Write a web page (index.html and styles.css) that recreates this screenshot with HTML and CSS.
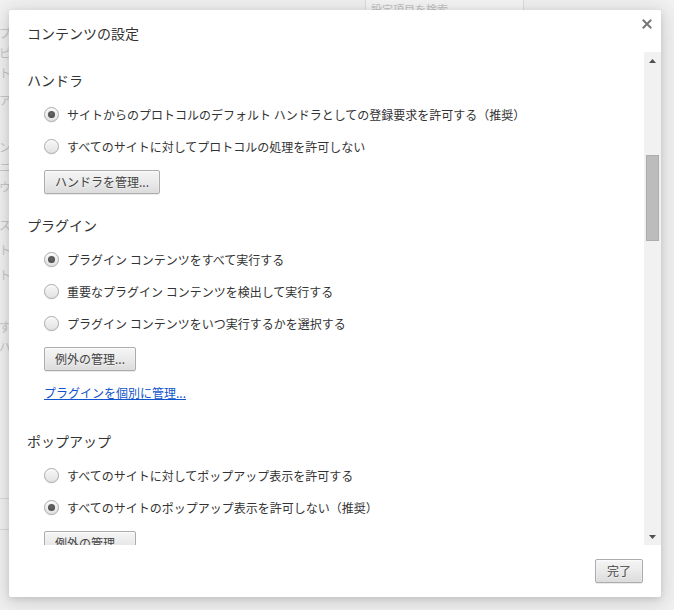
FILE: index.html
```html
<!DOCTYPE html>
<html lang="ja">
<head>
<meta charset="utf-8">
<title>コンテンツの設定</title>
<link rel="stylesheet" href="styles.css">
</head>
<body>
<div class="page">
  <div class="search">設定項目を検索</div>
  <div class="bg-col">
    <div class="bg-group g1"><p>ブ</p><p>ピ</p><p>ト</p></div>
    <div class="bg-group g2"><p>ア</p></div>
    <div class="bg-group g3"><p>ン</p><p>ニ</p><p>ウ</p></div>
    <div class="bg-group g4"><p>ス</p><p>ト</p><p>ト</p></div>
    <div class="bg-group g5"><p>す</p><p>ハ</p></div>
    <div class="bg-rule r1"></div>
    <div class="bg-rule r2"></div>
  </div>
</div>

<div class="dialog">
  <div class="dialog-head">
    <h1 class="dialog-title">コンテンツの設定</h1>
    <span class="close" aria-label="閉じる">
      <svg width="10" height="10" viewBox="0 0 10 10"><path d="M1.5 1.5 L8.5 8.5 M8.5 1.5 L1.5 8.5" stroke="#777" stroke-width="2" stroke-linecap="square"/></svg>
    </span>
  </div>

  <div class="dialog-body">
    <div class="content">
      <section class="section">
        <h2 class="section-title">ハンドラ</h2>
        <div class="options">
          <label class="option"><span class="radio checked"></span><span>サイトからのプロトコルのデフォルト ハンドラとしての登録要求を許可する（推奨）</span></label>
          <label class="option"><span class="radio"></span><span>すべてのサイトに対してプロトコルの処理を許可しない</span></label>
        </div>
        <button type="button" class="btn indent">ハンドラを管理...</button>
      </section>

      <section class="section">
        <h2 class="section-title">プラグイン</h2>
        <div class="options">
          <label class="option"><span class="radio checked"></span><span>プラグイン コンテンツをすべて実行する</span></label>
          <label class="option"><span class="radio"></span><span>重要なプラグイン コンテンツを検出して実行する</span></label>
          <label class="option"><span class="radio"></span><span>プラグイン コンテンツをいつ実行するかを選択する</span></label>
        </div>
        <button type="button" class="btn indent">例外の管理...</button>
        <a class="link indent" href="#">プラグインを個別に管理...</a>
      </section>

      <section class="section section-popup">
        <h2 class="section-title">ポップアップ</h2>
        <div class="options">
          <label class="option"><span class="radio"></span><span>すべてのサイトに対してポップアップ表示を許可する</span></label>
          <label class="option"><span class="radio checked"></span><span>すべてのサイトのポップアップ表示を許可しない（推奨）</span></label>
        </div>
        <button type="button" class="btn indent">例外の管理...</button>
      </section>
    </div>

    <div class="scrollbar">
      <div class="sb-btn"><svg width="7" height="4" viewBox="0 0 7 4"><path d="M0 4 L3.5 0 L7 4 Z" fill="#505050"/></svg></div>
      <div class="sb-track"><div class="sb-thumb"></div></div>
      <div class="sb-btn"><svg width="7" height="4" viewBox="0 0 7 4"><path d="M0 0 L3.5 4 L7 0 Z" fill="#505050"/></svg></div>
    </div>
  </div>

  <div class="dialog-foot">
    <button type="button" class="btn">完了</button>
  </div>
</div>
</body>
</html>
```

FILE: styles.css
```css
html, body {
  margin: 0;
  padding: 0;
}

body {
  width: 674px;
  height: 610px;
  overflow: hidden;
  background: #f3f3f3;
  font-family: "Noto Sans CJK JP", "Noto Sans", sans-serif;
  position: relative;
}

/* ---------- background page (dimmed) ---------- */
.page {
  height: 610px;
  overflow: hidden;
}

.search {
  margin: -5px 0 0 365px;
  width: 159px;
  height: 28px;
  box-sizing: border-box;
  border: 1px solid #dedede;
  background: #f7f7f7;
  padding-left: 5px;
  font-size: 11px;
  line-height: 26px;
  color: #c2c2c2;
}

.bg-col {
  margin-left: -1px;
  width: 12px;
  font-size: 12px;
  color: #c9c9c9;
}

.bg-group p {
  margin: 0;
  line-height: 20px;
  white-space: nowrap;
}

.g1 { margin-top: 0; }
.g2 { margin-top: 7px; }
.g3 { margin-top: 27px; }
.g4 { margin-top: 15px; }
.g4 p { line-height: 25px; }
.g5 { margin-top: 30px; }

.bg-rule {
  height: 1px;
  background: #dcdcdc;
}
.r1 { margin-top: 141px; }
.r2 { margin-top: 30px; }

/* ---------- dialog ---------- */
.dialog {
  position: absolute;
  left: 9px;
  top: 10px;
  width: 652px;
  height: 587px;
  background: #fff;
  border-radius: 2px;
  box-shadow: 0 4px 23px 5px rgba(0, 0, 0, 0.12), 0 2px 6px rgba(0, 0, 0, 0.12);
  display: flex;
  flex-direction: column;
  color: #333;
}

.dialog-head {
  height: 42px;
  box-sizing: border-box;
  padding: 13px 9px 0 18px;
  display: flex;
  justify-content: space-between;
  align-items: flex-start;
  flex-shrink: 0;
}

.dialog-title {
  margin: 0;
  font-size: 14px;
  font-weight: normal;
  line-height: 20px;
  color: #333;
}

.close {
  display: flex;
  margin-top: -4px;
  width: 10px;
  height: 10px;
}

.dialog-body {
  display: flex;
  height: 493px;
  flex-shrink: 0;
}

.content {
  flex: 1;
  overflow: hidden;
  padding: 18px 0 0 18px;
}

.section {
  display: flex;
  flex-direction: column;
  align-items: flex-start;
  margin-top: 21px;
}

.section:first-child {
  margin-top: 0;
}

.section-popup {
  margin-top: 28px;
}

.section-title {
  margin: 0 0 12px;
  font-size: 14px;
  font-weight: normal;
  line-height: 20px;
  color: #333;
}

.options {
  display: flex;
  flex-direction: column;
  gap: 8px;
  margin-left: 17px;
}

.option {
  display: flex;
  align-items: center;
  height: 24px;
  font-size: 12px;
  color: #333;
  white-space: nowrap;
}

.radio {
  width: 15px;
  height: 15px;
  box-sizing: border-box;
  border-radius: 50%;
  border: 1px solid #a9a9a9;
  background: linear-gradient(#f7f7f7, #e2e2e2);
  box-shadow: inset 0 1px 1px #fff, 0 1px 0 rgba(0, 0, 0, 0.05);
  margin-right: 8px;
  display: flex;
  align-items: center;
  justify-content: center;
  flex-shrink: 0;
}

.radio.checked::after {
  content: "";
  width: 7px;
  height: 7px;
  border-radius: 50%;
  background: radial-gradient(circle at 50% 40%, #6a6a6a, #404040);
}

.indent {
  margin-left: 17px;
}

.btn {
  font-family: "Noto Sans CJK JP", "Noto Sans", sans-serif;
  font-size: 12px;
  line-height: 22px;
  height: 24px;
  padding: 0 10px;
  margin-top: 12px;
  color: #444;
  border: 1px solid #acacac;
  border-radius: 2px;
  background: linear-gradient(#f4f4f4, #ededed 38%, #dcdcdc);
  box-shadow: 0 1px 0 rgba(0, 0, 0, 0.08), inset 0 1px 2px rgba(255, 255, 255, 0.75);
  text-shadow: 0 1px 0 #f0f0f0;
  white-space: nowrap;
  cursor: default;
}

.link {
  margin-top: 12px;
  font-size: 12px;
  line-height: 20px;
  color: #15c;
  text-decoration: underline;
  white-space: nowrap;
}

/* ---------- fake scrollbar ---------- */
.scrollbar {
  width: 17px;
  background: #f1f1f1;
  display: flex;
  flex-direction: column;
  flex-shrink: 0;
}

.sb-btn {
  height: 17px;
  display: flex;
  align-items: center;
  justify-content: center;
  flex-shrink: 0;
}

.sb-track {
  flex: 1;
}

.sb-thumb {
  margin: 86px 2px 0;
  height: 86px;
  box-sizing: border-box;
  background: #bcbcbc;
  border: 1px solid #adadad;
}

/* ---------- footer ---------- */
.dialog-foot {
  display: flex;
  justify-content: flex-end;
  padding: 14px 18px 14px 0;
}

.dialog-foot .btn {
  margin-top: 0;
  padding: 0 11px;
}
```
